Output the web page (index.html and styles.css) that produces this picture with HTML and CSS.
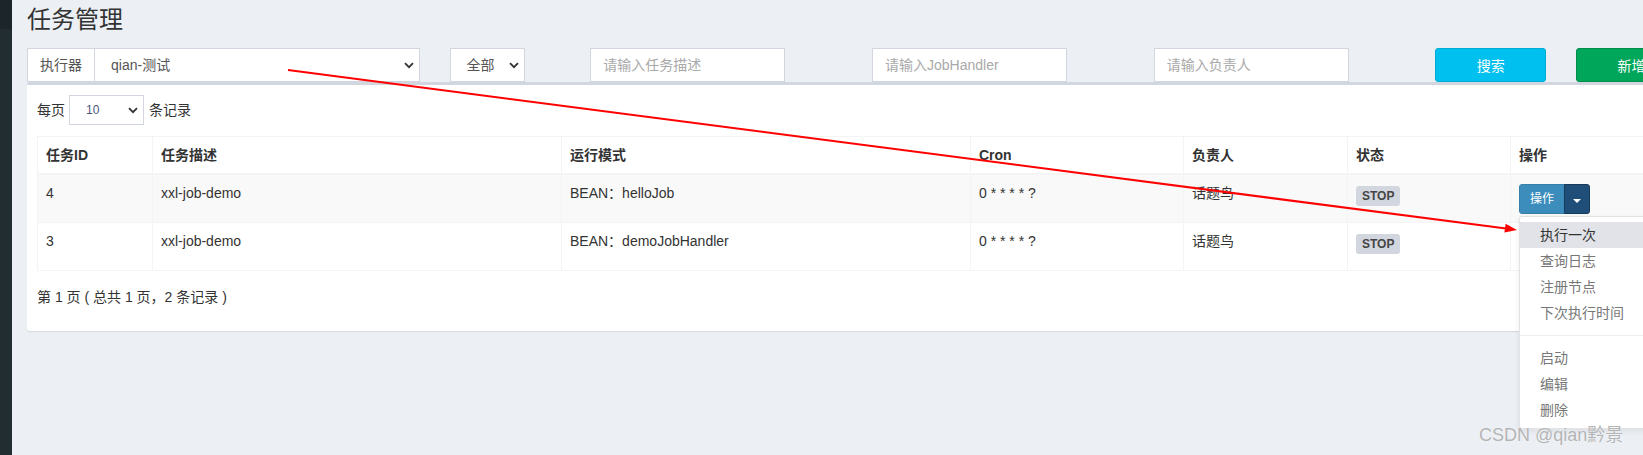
FILE: index.html
```html
<!DOCTYPE html>
<html lang="zh-CN">
<head>
    <meta charset="UTF-8">
    <meta name="viewport" content="width=device-width, initial-scale=1.0">
    <title>任务管理</title>
    <link rel="stylesheet" href="styles.css">
</head>
<body>

    <div class="wrapper">
        <!-- Barra lateral (apenas a borda visível) -->
        <aside class="main-sidebar"></aside>

        <div class="content-wrapper">
            <section class="content-header">
                <h1>任务管理</h1>
            </section>

            <section class="content">
                <!-- Filtros -->
                <div class="row filter-row">
                    <div class="col col-3">
                        <div class="input-group">
                            <span class="input-group-addon">执行器</span>
                            <div class="select-wrap select-grow">
                                <select class="form-control select-main">
                                    <option>qian-测试</option>
                                </select>
                                <svg class="chev" width="10" height="7" viewBox="0 0 10 7"><path d="M1 1.2 L5 5.2 L9 1.2" /></svg>
                            </div>
                        </div>
                    </div>
                    <div class="col col-1">
                        <div class="select-wrap select-status">
                            <select class="form-control">
                                <option>全部</option>
                            </select>
                            <svg class="chev" width="10" height="7" viewBox="0 0 10 7"><path d="M1 1.2 L5 5.2 L9 1.2" /></svg>
                        </div>
                    </div>
                    <div class="col col-2">
                        <input class="form-control text-input" type="text" placeholder="请输入任务描述">
                    </div>
                    <div class="col col-2">
                        <input class="form-control text-input" type="text" placeholder="请输入JobHandler">
                    </div>
                    <div class="col col-2">
                        <input class="form-control text-input" type="text" placeholder="请输入负责人">
                    </div>
                    <div class="col col-1">
                        <button class="btn btn-block btn-info">搜索</button>
                    </div>
                    <div class="col col-1">
                        <button class="btn btn-block btn-success">新增</button>
                    </div>
                </div>

                <!-- Lista de tarefas -->
                <div class="box">
                    <div class="box-body">
                        <div class="dt-length">
                            <span>每页</span>
                            <div class="select-wrap select-length">
                                <select class="form-control input-sm">
                                    <option>10</option>
                                </select>
                                <svg class="chev" width="10" height="7" viewBox="0 0 10 7"><path d="M1 1.2 L5 5.2 L9 1.2" /></svg>
                            </div>
                            <span>条记录</span>
                        </div>

                        <table class="table table-bordered table-striped">
                            <colgroup>
                                <col style="width: 115px">
                                <col style="width: 409px">
                                <col style="width: 409px">
                                <col style="width: 213px">
                                <col style="width: 164px">
                                <col style="width: 163px">
                                <col style="width: 167px">
                            </colgroup>
                            <thead>
                                <tr>
                                    <th>任务ID</th>
                                    <th>任务描述</th>
                                    <th>运行模式</th>
                                    <th>Cron</th>
                                    <th>负责人</th>
                                    <th>状态</th>
                                    <th>操作</th>
                                </tr>
                            </thead>
                            <tbody>
                                <tr>
                                    <td>4</td>
                                    <td>xxl-job-demo</td>
                                    <td>BEAN：helloJob</td>
                                    <td>0 * * * * ?</td>
                                    <td>话题鸟</td>
                                    <td><span class="label label-default">STOP</span></td>
                                    <td>
                                        <div class="btn-group open">
                                            <button class="btn btn-primary btn-sm">操作</button>
                                            <button class="btn btn-primary btn-sm dropdown-toggle"><span class="caret"></span></button>
                                            <ul class="dropdown-menu">
                                                <li class="hover"><a href="#">执行一次</a></li>
                                                <li><a href="#">查询日志</a></li>
                                                <li><a href="#">注册节点</a></li>
                                                <li><a href="#">下次执行时间</a></li>
                                                <li class="divider"></li>
                                                <li><a href="#">启动</a></li>
                                                <li><a href="#">编辑</a></li>
                                                <li><a href="#">删除</a></li>
                                            </ul>
                                        </div>
                                    </td>
                                </tr>
                                <tr>
                                    <td>3</td>
                                    <td>xxl-job-demo</td>
                                    <td>BEAN：demoJobHandler</td>
                                    <td>0 * * * * ?</td>
                                    <td>话题鸟</td>
                                    <td><span class="label label-default">STOP</span></td>
                                    <td>
                                        <div class="btn-group">
                                            <button class="btn btn-primary btn-sm">操作</button>
                                            <button class="btn btn-primary btn-sm dropdown-toggle"><span class="caret"></span></button>
                                        </div>
                                    </td>
                                </tr>
                            </tbody>
                        </table>

                        <div class="dt-info">第 1 页 ( 总共 1 页，2 条记录 )</div>
                    </div>
                </div>
            </section>
        </div>
    </div>

    <!-- Seta vermelha de anotação -->
    <svg class="annotation" width="1643" height="455" viewBox="0 0 1643 455">
        <line x1="288" y1="70" x2="1506" y2="228.6" stroke="#ff0000" stroke-width="2" />
        <polygon points="1517,230 1504.4,232.6 1505.6,223.8" fill="#ff0000" />
    </svg>

    <div class="watermark">CSDN @qian黔景</div>

</body>
</html>
```

FILE: styles.css
```css
/* Estilos gerais */
html, body {
    margin: 0;
    padding: 0;
    height: 100%;
    overflow: hidden;
}

body {
    font-family: "Liberation Sans", "Noto Sans CJK SC", sans-serif;
    font-size: 14px;
    line-height: 20px;
    color: #333;
    background-color: #ecf0f5;
    position: relative;
}

.wrapper {
    display: flex;
    min-height: 100%;
}

/* Barra lateral */
.main-sidebar {
    flex: none;
    width: 12px;
    background: linear-gradient(#1c2529 0, #1c2529 29px, #222d32 29px);
}

.content-wrapper {
    flex: none;
    width: 1690px;
}

/* Cabeçalho */
.content-header {
    padding: 7px 15px 0;
}

.content-header h1 {
    margin: 0;
    font-size: 24px;
    line-height: 26px;
    font-weight: normal;
    color: #333;
}

.content {
    padding: 15px 15px 0;
}

/* Grade de filtros */
.row {
    display: grid;
    grid-template-columns: repeat(12, 1fr);
    margin: 0 -15px;
}

.col {
    padding: 0 15px;
}

.col-1 { grid-column: span 1; }
.col-2 { grid-column: span 2; }
.col-3 { grid-column: span 3; }

.form-control {
    box-sizing: border-box;
    height: 34px;
    padding: 6px 12px;
    border: 1px solid #d2d6de;
    border-radius: 0;
    background-color: #fff;
    font-family: inherit;
    font-size: 14px;
    color: #555;
    outline: none;
}

.text-input {
    width: 195px;
}

.text-input::placeholder {
    color: #a9a9a9;
}

.input-group {
    display: flex;
}

.input-group-addon {
    box-sizing: border-box;
    height: 34px;
    padding: 6px 12px;
    border: 1px solid #d2d6de;
    border-right: none;
    background-color: #fff;
    color: #555;
}

.select-wrap {
    position: relative;
}

.select-wrap select {
    appearance: none;
    -webkit-appearance: none;
    width: 100%;
    padding-left: 16px;
}

.select-grow {
    flex: 1;
}

.select-status {
    width: 75px;
}

.select-length {
    width: 75px;
    margin: 0 5px 0 4px;
}

.chev {
    position: absolute;
    right: 6px;
    top: 50%;
    margin-top: -3px;
    pointer-events: none;
}

.chev path {
    fill: none;
    stroke: #333;
    stroke-width: 1.8;
}

/* Botões */
.btn {
    box-sizing: border-box;
    height: 34px;
    padding: 6px 12px;
    border: 1px solid transparent;
    border-radius: 3px;
    font-family: inherit;
    font-size: 14px;
    color: #fff;
    cursor: pointer;
}

.btn-block {
    width: 100%;
}

.btn-info {
    background-color: #00c0ef;
    border-color: #00acd6;
}

.btn-success {
    background-color: #00a65a;
    border-color: #008d4c;
}

.btn-primary {
    background-color: #3c8dbc;
    border-color: #367fa9;
}

.btn-sm {
    height: 30px;
    padding: 5px 10px;
    font-size: 12px;
    line-height: 18px;
}

/* Caixa principal */
.box {
    margin-top: 0;
    background-color: #fff;
    border-top: 3px solid #d2d6de;
    border-radius: 3px;
    box-shadow: 0 1px 1px rgba(0, 0, 0, 0.1);
}

.box-body {
    padding: 10px;
}

.dt-length {
    display: flex;
    align-items: center;
    height: 30px;
    margin-bottom: 11px;
}

.input-sm {
    height: 30px;
    padding: 5px 10px;
    font-size: 12px;
    color: #4a5579;
}

/* Tabela */
.table {
    width: 1640px;
    table-layout: fixed;
    border-collapse: collapse;
    border: 1px solid #f4f4f4;
}

.table th,
.table td {
    padding: 8px;
    text-align: left;
    vertical-align: top;
    border: 1px solid #f4f4f4;
    white-space: nowrap;
}

.table thead th {
    font-weight: bold;
    border-bottom-width: 2px;
}

.table-striped tbody tr:nth-child(odd) {
    background-color: #f9f9f9;
}

.label {
    display: inline-block;
    height: 20px;
    margin-top: 3px;
    padding: 0 6px;
    border-radius: 3px;
    font-size: 12px;
    font-weight: bold;
    line-height: 20px;
    vertical-align: top;
}

.label-default {
    background-color: #d2d6de;
    color: #444;
}

/* Grupo de botões e menu suspenso */
.btn-group {
    position: relative;
    display: inline-flex;
    margin-top: 1px;
}

.btn-group .btn:first-child {
    border-top-right-radius: 0;
    border-bottom-right-radius: 0;
}

.btn-group .dropdown-toggle {
    width: 26px;
    padding: 0;
    margin-left: -1px;
    border-top-left-radius: 0;
    border-bottom-left-radius: 0;
}

.btn-group.open .dropdown-toggle {
    background-color: #1f4e78;
    border-color: #163a5a;
}

.caret {
    display: inline-block;
    width: 0;
    height: 0;
    margin-top: 2px;
    border-top: 4px solid #fff;
    border-left: 4px solid transparent;
    border-right: 4px solid transparent;
    vertical-align: middle;
}

.dropdown-menu {
    position: absolute;
    top: 100%;
    left: 0;
    z-index: 10;
    min-width: 160px;
    margin: 2px 0 0;
    padding: 5px 0;
    list-style: none;
    background-color: #fff;
    border: 1px solid #e3e3e3;
    border-radius: 3px;
    box-shadow: 0 2px 6px rgba(0, 0, 0, 0.08);
}

.dropdown-menu li a {
    display: block;
    padding: 3px 20px;
    line-height: 20px;
    color: #777;
    text-decoration: none;
}

.dropdown-menu li.hover a {
    background-color: #e1e3e9;
    color: #333;
}

.dropdown-menu .divider {
    height: 1px;
    margin: 9px 0;
    background-color: #eee;
}

.dt-info {
    margin: 16px 0 14px;
}

/* Anotações sobre a captura */
.annotation {
    position: absolute;
    left: 0;
    top: 0;
    z-index: 20;
    pointer-events: none;
}

.watermark {
    position: absolute;
    left: 1479px;
    top: 424px;
    z-index: 20;
    font-size: 18px;
    line-height: 22px;
    color: #b4b4b4;
    text-shadow: 0 0 1px #fff;
}
```
